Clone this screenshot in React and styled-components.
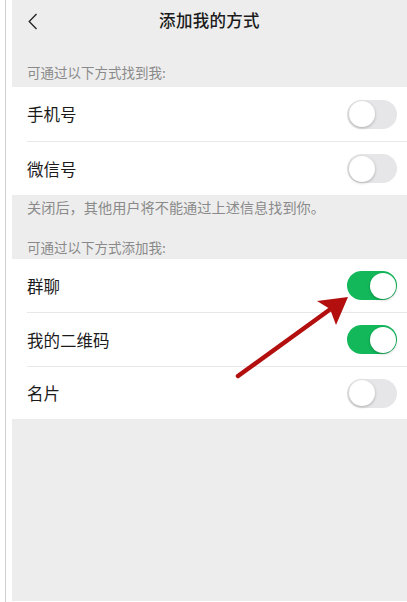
import React from 'react';
import styled, { createGlobalStyle } from 'styled-components';

const GlobalStyle = createGlobalStyle`
  html, body {
    margin: 0;
    padding: 0;
    background: #fff;
  }
  body {
    font-family: "Noto Sans CJK SC", "Noto Sans", sans-serif;
  }
`;

const Page = styled.div`
  display: flex;
  height: 602px;
  padding-left: 5px;
  box-sizing: border-box;
`;

const Rail = styled.div`
  width: 1px;
  background: #cfcfcf;
  margin-right: 6px;
`;

const Screen = styled.div`
  position: relative;
  flex: 1;
  height: 601px;
  background: #ededed;
  display: flex;
  flex-direction: column;
  overflow: hidden;
`;

const Header = styled.div`
  height: 40px;
  display: flex;
  align-items: center;
  justify-content: center;
  position: relative;
`;

const BackButton = styled.div`
  position: absolute;
  left: 16px;
  top: 11px;
  width: 10px;
  height: 17px;
`;

const Title = styled.div`
  font-size: 16.5px;
  font-weight: 500;
  color: #1b1b1b;
  letter-spacing: 0.3px;
`;

const SectionLabel = styled.div`
  padding: ${(p) => (p.$first ? '24px 15px 7px' : '24px 15px 4px')};
  font-size: 13.5px;
  line-height: 16px;
  color: #8a8a8a;
`;

const Note = styled.div`
  padding: 4px 15px 0;
  font-size: 14.2px;
  line-height: 16px;
  color: #8a8a8a;
`;

const Group = styled.div`
  background: #fff;
`;

const Row = styled.div`
  height: ${(p) => p.$h}px;
  margin-left: 15px;
  padding-right: 10px;
  box-sizing: border-box;
  display: flex;
  align-items: center;
  justify-content: space-between;
  border-top: ${(p) => (p.$first ? 'none' : '1px solid #e8e8e8')};
`;

const RowText = styled.span`
  font-size: 16.5px;
  color: #1b1b1b;
`;

const Track = styled.div`
  position: relative;
  width: 50px;
  height: 29px;
  border-radius: 15px;
  background: ${(p) => (p.$on ? '#13b85b' : '#e6e6e8')};
`;

const Knob = styled.div`
  position: absolute;
  top: 1.5px;
  left: ${(p) => (p.$on ? '22.5px' : '1.5px')};
  width: 26px;
  height: 26px;
  border-radius: 50%;
  background: #fff;
  box-shadow: 0 1px 3px rgba(0, 0, 0, 0.25);
`;

const Arrow = styled.svg`
  position: absolute;
  left: 0;
  top: 0;
  pointer-events: none;
`;

const Toggle = ({ on }) => (
  <Track $on={on}>
    <Knob $on={on} />
  </Track>
);

const findRows = [
  { label: '手机号', on: false },
  { label: '微信号', on: false },
];

const addRows = [
  { label: '群聊', on: true, h: 53 },
  { label: '我的二维码', on: true, h: 54 },
  { label: '名片', on: false, h: 53 },
];

export default function App() {
  return (
    <>
      <GlobalStyle />
      <Page>
        <Rail />
        <Screen>
          <Header>
            <BackButton>
              <svg width="10" height="17" viewBox="0 0 10 17">
                <polyline points="8.5,1 1.2,8.5 8.5,16" fill="none" stroke="#222" strokeWidth="1.3" />
              </svg>
            </BackButton>
            <Title>添加我的方式</Title>
          </Header>

          <SectionLabel $first>可通过以下方式找到我:</SectionLabel>
          <Group>
            {findRows.map((r, i) => (
              <Row key={r.label} $first={i === 0} $h={54}>
                <RowText>{r.label}</RowText>
                <Toggle on={r.on} />
              </Row>
            ))}
          </Group>
          <Note>关闭后，其他用户将不能通过上述信息找到你。</Note>

          <SectionLabel>可通过以下方式添加我:</SectionLabel>
          <Group>
            {addRows.map((r, i) => (
              <Row key={r.label} $first={i === 0} $h={r.h}>
                <RowText>{r.label}</RowText>
                <Toggle on={r.on} />
              </Row>
            ))}
          </Group>

          <Arrow width="395" height="601" viewBox="0 0 395 601">
            <line x1="226" y1="376" x2="320" y2="308" stroke="#b30f0f" strokeWidth="4.5" strokeLinecap="round" />
            <polygon points="336,297 305,301 318,309 324,325" fill="#b30f0f" />
          </Arrow>
        </Screen>
      </Page>
    </>
  );
}
